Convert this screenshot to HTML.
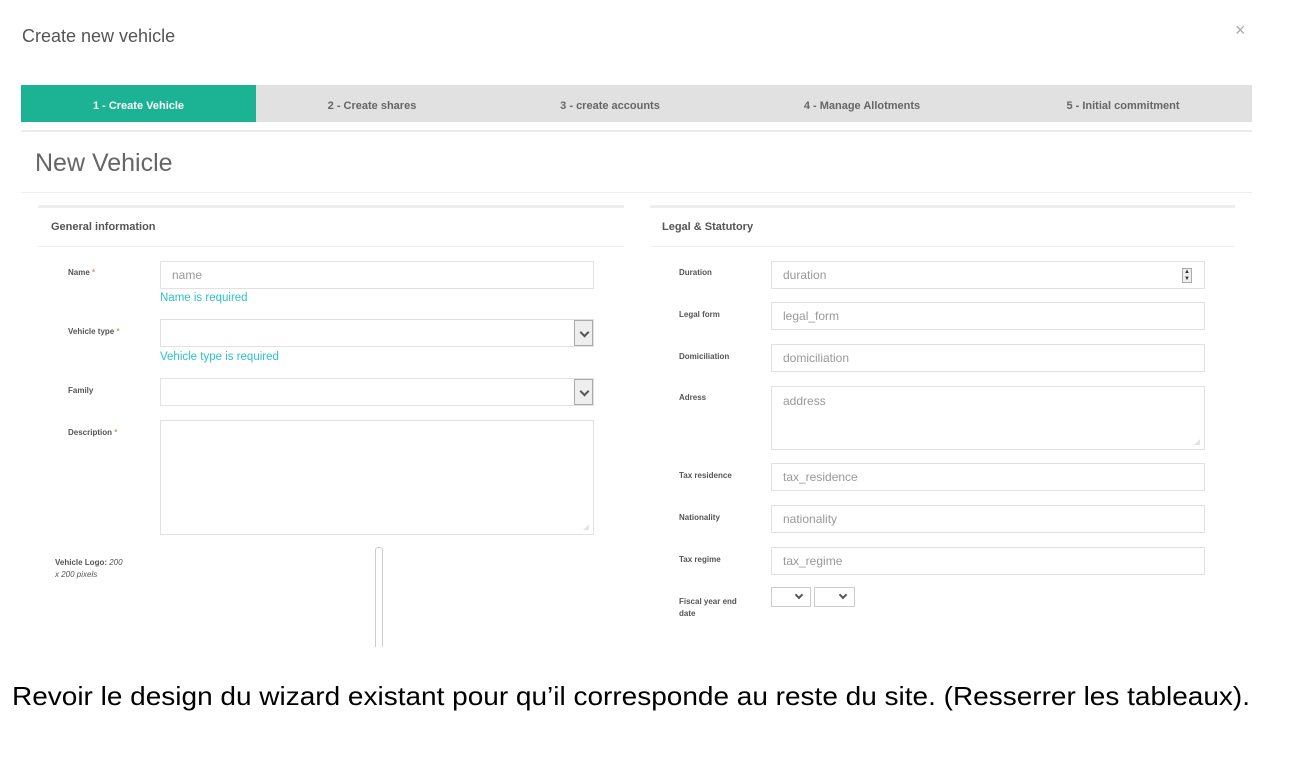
<!DOCTYPE html>
<html><head><meta charset="utf-8"><style>
*{margin:0;padding:0;box-sizing:border-box}
body{width:1292px;height:758px;background:#fff;position:relative;overflow:hidden;font-family:"Liberation Sans",sans-serif;color:#555}
.a{position:absolute}
.tab{position:absolute;top:85px;height:37px;line-height:37px;padding-top:3px;font-size:11px;font-weight:bold;text-align:center;color:#666}
.in{position:absolute;border:1px solid #e2e2e2;background:#fff;font-size:12px;color:#999;padding-left:11px;line-height:26px}
.lb{position:absolute;font-size:8px;font-weight:bold;color:#555}
.lb i{color:#e8915f;font-style:normal}
.err{position:absolute;font-size:11.5px;color:#2cc3c8}
.sb{position:absolute;right:0;top:0;width:19px;height:100%;border:1px solid #aaa;background:#eee}
.sb:after{content:"";position:absolute;left:6px;top:8px;width:5px;height:5px;border-right:2px solid #555;border-bottom:2px solid #555;transform:rotate(45deg)}
.rz{position:absolute;right:4px;bottom:4px;width:6px;height:6px;background:radial-gradient(circle,#999 0.6px,transparent 0.8px) 0 0/2px 2px;clip-path:polygon(100% 0,100% 100%,0 100%)}
</style></head><body>
<div class="a" style="left:22px;top:26px;font-size:18px;color:#555">Create new vehicle</div>
<div class="a" style="left:1235px;top:20px;font-size:18px;color:#aaa">×</div>
<div class="a" style="left:21px;top:85px;width:1231px;height:37px;background:#e1e1e1"></div>
<div class="tab" style="left:21px;width:235px;background:#1cb394;color:#fff">1 - Create Vehicle</div>
<div class="tab" style="left:256px;width:232px">2 - Create shares</div>
<div class="tab" style="left:490px;width:240px">3 - create accounts</div>
<div class="tab" style="left:740px;width:244px">4 - Manage Allotments</div>
<div class="tab" style="left:1000px;width:246px">5 - Initial commitment</div>
<div class="a" style="left:21px;top:130px;width:1231px;height:2px;background:#e9ecee"></div>
<div class="a" style="left:35px;top:149px;font-size:25px;color:#666">New Vehicle</div>
<div class="a" style="left:21px;top:192px;width:1231px;height:1px;background:#eee"></div>

<div class="a" style="left:38px;top:205px;width:586px;height:3px;background:#eee"></div>
<div class="a" style="left:51px;top:221px;font-size:11px;font-weight:bold;color:#555">General information</div>
<div class="a" style="left:38px;top:246px;width:586px;height:1px;background:#eee"></div>
<div class="lb" style="left:68px;top:268px">Name <i>*</i></div>
<div class="in" style="left:160px;top:261px;width:434px;height:28px">name</div>
<div class="err" style="left:160px;top:292px">Name is required</div>
<div class="lb" style="left:68px;top:327px">Vehicle type <i>*</i></div>
<div class="in" style="left:160px;top:319px;width:434px;height:28px"><div class="sb"></div></div>
<div class="err" style="left:160px;top:351px">Vehicle type is required</div>
<div class="lb" style="left:68px;top:386px">Family</div>
<div class="in" style="left:160px;top:378px;width:434px;height:28px"><div class="sb"></div></div>
<div class="lb" style="left:68px;top:428px">Description <i>*</i></div>
<div class="in" style="left:160px;top:420px;width:434px;height:115px"><div class="rz"></div></div>
<div class="lb" style="left:55px;top:557px;line-height:12px">Vehicle Logo: <i style="color:#555;font-style:italic;font-weight:normal">200<br>x 200 pixels</i></div>
<div class="a" style="left:375px;top:547px;width:8px;height:100px;border:1px solid #ccc;border-bottom:none;border-radius:3px 3px 0 0"></div>

<div class="a" style="left:650px;top:205px;width:585px;height:3px;background:#eee"></div>
<div class="a" style="left:662px;top:221px;font-size:11px;font-weight:bold;color:#555">Legal &amp; Statutory</div>
<div class="a" style="left:650px;top:246px;width:585px;height:1px;background:#eee"></div>
<div class="lb" style="left:679px;top:268px">Duration</div>
<div class="in" style="left:771px;top:261px;width:434px;height:28px">duration<div class="a" style="right:12px;top:6px;width:10px;height:15px;border:1px solid #aaa;background:#eee;font-size:6px;line-height:7px;text-align:center;color:#333">▲<br>▼</div></div>
<div class="lb" style="left:679px;top:310px">Legal form</div>
<div class="in" style="left:771px;top:302px;width:434px;height:28px">legal_form</div>
<div class="lb" style="left:679px;top:352px">Domiciliation</div>
<div class="in" style="left:771px;top:344px;width:434px;height:28px">domiciliation</div>
<div class="lb" style="left:679px;top:393px">Adress</div>
<div class="in" style="left:771px;top:386px;width:434px;height:64px;padding-top:1px">address<div class="rz"></div></div>
<div class="lb" style="left:679px;top:471px">Tax residence</div>
<div class="in" style="left:771px;top:463px;width:434px;height:28px">tax_residence</div>
<div class="lb" style="left:679px;top:513px">Nationality</div>
<div class="in" style="left:771px;top:505px;width:434px;height:28px">nationality</div>
<div class="lb" style="left:679px;top:555px">Tax regime</div>
<div class="in" style="left:771px;top:547px;width:434px;height:28px">tax_regime</div>
<div class="lb" style="left:679px;top:596px;line-height:12px">Fiscal year end<br>date</div>
<div class="in" style="left:771px;top:587px;width:40px;height:20px;border-color:#ccc"><div class="a" style="right:8px;top:4px;width:6px;height:6px;border-right:2px solid #555;border-bottom:2px solid #555;transform:rotate(45deg)"></div></div>
<div class="in" style="left:814px;top:587px;width:41px;height:20px;border-color:#ccc"><div class="a" style="right:8px;top:4px;width:6px;height:6px;border-right:2px solid #555;border-bottom:2px solid #555;transform:rotate(45deg)"></div></div>

<svg class="a" style="left:0;top:670px" width="1292" height="50"><text x="12" y="35" font-family="Liberation Sans, sans-serif" font-size="26" fill="#000" textLength="1238" lengthAdjust="spacingAndGlyphs">Revoir le design du wizard existant pour qu’il corresponde au reste du site.  (Resserrer les tableaux).</text></svg>
</body></html>
